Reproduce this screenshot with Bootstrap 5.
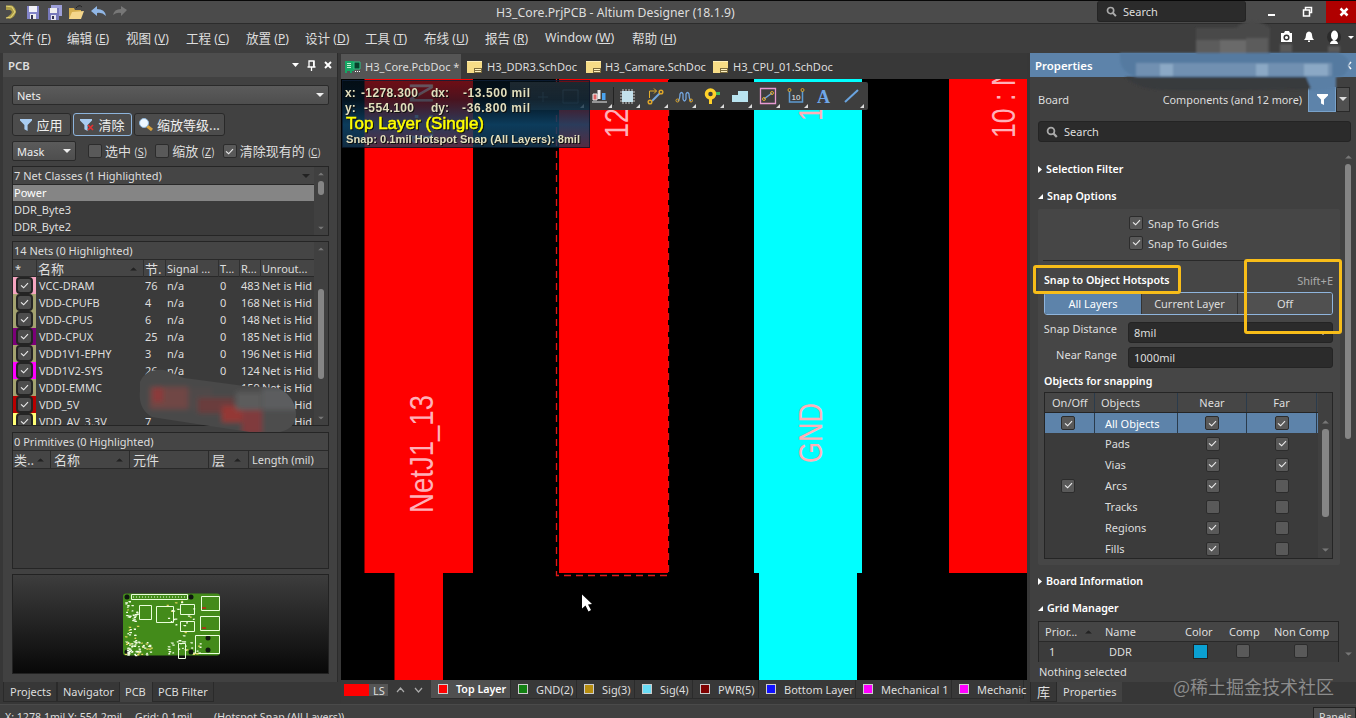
<!DOCTYPE html>
<html lang="zh">
<head>
<meta charset="utf-8">
<title>H3_Core.PrjPCB - Altium Designer (18.1.9)</title>
<meta name="viewport" content="width=device-width, initial-scale=1">
<link href="https://cdn.jsdelivr.net/npm/bootstrap@5.3.0/dist/css/bootstrap.min.css" rel="stylesheet">
<style>
html,body{height:718px;overflow:hidden}
body{width:1356px;background:#373737;color:#dedede;font:11px/17px "Noto Sans","Noto Sans CJK SC",sans-serif;white-space:nowrap}
.cjk{font-family:"Noto Sans CJK SC",sans-serif;font-size:13px}
svg{display:block;flex:none}
.titlebar{height:24px;background:#4b4b4b;border-top:1px solid #080808;border-bottom:1px solid #2c2c2c;font-size:11px}
.menubar{height:29px;background:#3e3e3e;font-size:12px}
.menubar span.m{position:relative;flex:none}
.menubar .cjk{font-size:12.6px}
.work{height:651px}
.leftcol{width:341px;padding-left:3px}
.lpanel{width:335px;height:629px;background:#414141;border-right:1px solid #2b2b2b}
.phead{height:24px;background:#4d4d4d;font-weight:600;font-size:11.4px}
.combo{background:linear-gradient(#5b5b5b,#4e4e4e);border:1px solid #2a2a2a;border-radius:2px;color:#eee}
.tool-btn{height:23px;background:#4c4c4c;border:1px solid #292929;border-radius:3px;color:#eee;gap:4px}
.tool-btn.sel{border-color:#8db4dc}
.box{background:#3b3b3b;border:1px solid #252525;overflow:hidden}
.bhead{background:#454545;border-bottom:1px solid #292929}
.chk{width:14px;height:14px;border-radius:2px;background:#595959;border:1px solid #2c2c2c;flex:none;display:inline-flex;align-items:center;justify-content:center}
.net-row{display:grid;grid-template-columns:25px 107px 22px 53px 21px 21px 1fr;height:17px;line-height:17px}
.net-head>span+span{border-left:1px solid #303030;margin-left:-2px;padding-left:1px}
.strip{display:flex;align-items:center;justify-content:center;border-bottom:1px solid #222}
.strip .chk{width:17px;height:17px;background:#4d4d4d;border:2px solid #242424;border-radius:4px}
.prim-head>span{display:flex;align-items:center}
.prim-head>span+span{border-left:1px solid #2b2b2b;padding-left:3px}
.sb{width:14px;background:#404040;position:relative;flex:none}
.thumb{background:#858585;border-radius:3px;width:6px;margin:0 auto}
.preview{background:linear-gradient(#3d3d3d,#080808);border:1px solid #222}
.ptab{height:20px;line-height:20px;background:#373737;border:1px solid #2a2a2a;border-top:0;font-size:11px}
.ptab.on{background:#424242;border-color:#424242}
.midcol{width:686px;background:#383838}
.doctab{height:25px;font-size:11.05px;line-height:15px}
.doctab.on{background:#555}
.canvas{height:601px;position:relative;background:#000}
.cad-tools{position:absolute;left:169px;top:3px;width:358px;height:28px;background:#3e3e3e;border-radius:0 2px 2px 0}
.hud{position:absolute;left:1px;top:1px;width:248px;height:68px;border:1px solid rgba(10,20,40,.7);background:linear-gradient(rgba(6,24,36,.58),rgba(4,26,42,.72) 28%,rgba(14,68,104,.88) 66%,rgba(22,60,90,.74))}
.hud svg{filter:drop-shadow(1px 1px 0 #111)}
.layer{height:19px;line-height:19px;border-right:1px solid #2b2b2b;border-bottom:1px solid #2b2b2b}
.layer i{width:10px;height:10px;border:1px solid #ccc;flex:none}
.rightcol{width:329px;padding-left:3px}
.rpanel{height:629px;background:#404040;position:relative;overflow:hidden}
.rhead{background:#5d83aa;color:#fff}
.darkfield{background:#2b2b2b;border:1px solid #242424;border-radius:3px}
.sec{font-weight:600;color:#fff;font-size:10.7px;height:17px}
.grp{width:302px;height:356px;margin-left:8px;background:#464646;border-radius:2px;padding:0 7px 0 5px}
.seg{height:23px;border:1px solid #8fb5dd;border-radius:3px;overflow:hidden;margin-left:1px;width:289px}
.seg>div{background:#505050;text-align:center;line-height:21px;border-right:1px solid #333}
.snap-row{display:grid;grid-template-columns:50px 83px 69px 70px;height:21px;align-items:center}
.snap-row>*{display:flex;align-items:center;height:100%}
.snap-row.hl{height:20px;background:#5d83aa;color:#fff}
.snap-row.hl>*,.snap-head>*{border-right:1px solid #2a3b4c}
.snap-head{height:20px;background:#464646;border-bottom:1px solid #252525}
.grid-row{display:grid;grid-template-columns:60px 79px 45px 45px 1fr}
.yel{position:absolute;border:3px solid #f8bd19;border-radius:3px}
.status{height:14px;background:#404040;border-top:1px solid #4a4a4a;overflow:hidden;position:relative;font-size:10.6px}
.mosaic{position:absolute;pointer-events:none}
.wm{position:absolute;left:1173px;top:673px;font:18px/26px "Noto Sans CJK SC",sans-serif;color:#8c8c8c}
</style>
<script src="https://cdn.jsdelivr.net/npm/bootstrap@5.3.0/dist/js/bootstrap.bundle.min.js"></script>
</head>
<body class="position-relative">
<svg width="0" height="0" class="position-absolute">
<symbol id="ck" viewBox="0 0 10 8"><path d="M1 3.8 4 6.6 9 1.2" fill="none" stroke="#ececec" stroke-width="1.3"/></symbol>
<symbol id="up" viewBox="0 0 8 4"><path d="M0 4 4 0l4 4z" fill="currentColor"/></symbol>
<symbol id="dn" viewBox="0 0 8 4"><path d="M0 0h8L4 4z" fill="currentColor"/></symbol>
<symbol id="mag" viewBox="0 0 12 12"><circle cx="5" cy="5" r="3.4" fill="none" stroke="#aaa" stroke-width="1.8"/><path d="m7.5 7.5 3.3 3.6" stroke="#aaa" stroke-width="2.2"/></symbol>
<symbol id="fun" viewBox="0 0 12 12"><path d="M0 0h12v1.5L7.6 6v6L4.4 10.3V6L0 1.5z" fill="currentColor"/></symbol>
<symbol id="sch" viewBox="0 0 15 12"><path d="M0 0h15v12H0z" fill="#f6dc86"/><path d="M0 0h15v1H0z" fill="#fff0b8"/><path d="M7 7h8v5H7z" fill="#7c6c3d"/><path d="M8 8h6v1H8zm0 2h6v1H8z" fill="#fff2c0"/></symbol>
</svg>

<header class="titlebar d-flex align-items-center">
 <svg width="130" height="22" viewBox="0 1 130 22">
  <path d="M6 6q8-3 10 5q0 5-6 8l-4-1 5-4q2-3-1-4l-4 0z" fill="#a99a45"/><path d="M6 6l6 1 3 5-4 5-5 1" fill="none" stroke="#e2d27a" stroke-width="1.2"/>
  <path d="M27 6h12v13H27z" fill="#8385c8"/><path d="M29 6h8v6h-8z" fill="#f2f2f8"/><path d="M30 14h6v5h-6z" fill="#eee"/><path d="M31 15h2v4h-2z" fill="#335"/>
  <path d="M51 5h11v11H51z" fill="#9d9fd8"/><path d="M48 8h11v12H48z" fill="#7779bb"/><path d="M50 8h7v5h-7z" fill="#eee"/><path d="M51 15h5v5h-5z" fill="#e5e5f0"/><path d="M52 16h2v3h-2z" fill="#335"/>
  <path d="M69 8h5l1 2h6v9H69z" fill="#d5ae4e"/><path d="m72 12 12-1-3 8H69z" fill="#f4d68b"/><path d="M76 8q3-4 6-1" stroke="#222" fill="none"/>
  <path d="m91 11 6-5v3q8 0 9 7-4-4-9-3v3z" fill="#91b7e6"/>
  <path d="m127 10-6-4v3q-7 0-8 6 4-3 8-2v3z" fill="#777"/>
 </svg>
 <div class="flex-shrink-0" style="width:601px;margin-left:366px;padding-top:1px;font-size:12.250px">H3_Core.PrjPCB - Altium Designer (18.1.9)</div>
 <div class="darkfield d-flex align-items-center ps-2 flex-shrink-0 align-self-start" style="width:149px;height:21px;border-top:0;margin-right:20px"><svg width="11" height="11" viewBox="0 0 12 12"><use href="#mag"/></svg><span style="margin-left:6px">Search</span></div>
 <svg width="60" height="22" viewBox="1266 1 60 22"><path d="M1268 14h7v2h-7z" fill="#fff"/><path d="M1303.500 10h6v6h-6zM1305.500 9.500V7.500h6v5h-2" fill="none" stroke="#fff" stroke-width="1.500"/></svg>
 <div class="d-flex align-items-center justify-content-center" style="width:30px;height:22px;background:#b00000"><svg width="10" height="10" style="margin-left:5px"><path d="m1.500 1.500 7 7m0-7-7 7" stroke="#fff" stroke-width="2.500"/></svg></div>
</header>

<nav class="menubar position-relative">
 <div id="menus" class="d-flex align-items-center" style="padding-left:9px;height:27px"></div>
 <svg width="80" height="20" viewBox="1276 28 80 20" class="position-absolute end-0" style="top:4px"><path d="M1281 33h3l1-2h4l1 2h2v9h-11z" fill="#fff"/><circle cx="1286.500" cy="37.500" r="2.300" fill="#fff" stroke="#333" stroke-width="1.500"/><path d="M1304 40q2-2 2-5 0-3 3-3.500 3 .5 3 3.500 0 3 2 5zM1308 40.500h2v1.500h-2z" fill="#fff"/><circle cx="1334" cy="37" r="7" fill="#2b2b2b"/><ellipse cx="1334.500" cy="35.500" rx="3.500" ry="5" fill="#fff"/><path d="M1330 44q0-3 4-4 4 1 4 4z" fill="#fff"/><path d="M1348 36h6l-3 3z" fill="#fff"/></svg>
</nav>

<main class="work d-flex">
<section class="leftcol flex-shrink-0">
 <div class="lpanel">
  <div class="phead d-flex align-items-center ps-1"><span style="margin-left:1px">PCB</span>
   <svg class="ms-auto" width="50" height="14" viewBox="0 0 50 14"><path d="M5 5h7l-3.500 4z" fill="#fff"/><path d="M22 3h5v6h-5zM20.500 9h8M24.500 9v4" stroke="#fff" stroke-width="1.300" fill="none"/><path d="M26 3h1.500v6H26z" fill="#fff"/><path d="m38 4 6 6m0-6-6 6" stroke="#fff" stroke-width="1.900"/></svg></div>
  <div style="padding:8px 8px 0 9px">
   <div class="combo d-flex align-items-center px-1" style="height:20px">Nets<svg class="ms-auto" width="8" height="4"><use href="#dn"/></svg></div>
   <div class="d-flex" style="gap:2px;margin-top:8px">
    <div class="tool-btn d-flex align-items-center justify-content-center" style="width:59px"><svg width="12" height="12" style="color:#a9cdf2"><use href="#fun"/></svg><span class="cjk">应用</span></div>
    <div class="tool-btn sel d-flex align-items-center justify-content-center" style="width:59px"><svg width="14" height="12" viewBox="0 0 14 12" style="color:#a9cdf2"><use href="#fun" width="12" height="12"/><path d="m8 6 5 5m0-5-5 5" stroke="#e43131" stroke-width="1.700"/></svg><span class="cjk">清除</span></div>
    <div class="tool-btn d-flex align-items-center justify-content-center" style="width:91px"><svg width="14" height="13" viewBox="0 0 14 13"><path d="m8 8 5 4" stroke="#d7a13d" stroke-width="3"/><circle cx="5" cy="5" r="4.500" fill="#eef8ff" stroke="#91b8dc"/></svg><span class="cjk">缩放等级...</span></div>
   </div>
   <div class="d-flex align-items-center" style="height:20px;margin-top:5px">
    <div class="combo d-flex align-items-center px-1" style="width:64px;height:20px">Mask<svg class="ms-auto" width="8" height="4"><use href="#dn"/></svg></div>
    <span class="chk" style="margin-left:12px"></span><span class="cjk" style="margin-left:3px">选中 <small style="font-size:10.500px">(<u>S</u>)</small></span>
    <span class="chk" style="margin-left:8px"></span><span class="cjk" style="margin-left:3px">缩放 <small style="font-size:10.500px">(<u>Z</u>)</small></span>
    <span class="chk" style="margin-left:8px"><svg width="9" height="7"><use href="#ck"/></svg></span><span class="cjk" style="margin-left:3px">清除现有的 <small style="font-size:10px">(<u>C</u>)</small></span>
   </div>
   <div class="box d-flex" style="height:70px;margin-top:5px">
    <div class="flex-grow-1"><div class="bhead d-flex align-items-center" style="height:18px;padding-left:1px">7 Net Classes (1 Highlighted)<svg class="ms-auto me-1" width="8" height="4" style="color:#222"><use href="#dn"/></svg></div>
     <div style="background:#858585;color:#fff;height:16px;line-height:16px;padding-left:1px">Power</div><div style="padding-left:1px">DDR_Byte3</div><div style="padding-left:1px">DDR_Byte2</div></div>
    <div class="sb d-flex flex-column align-items-center" style="color:#777;padding:5px 0"><svg width="6" height="4" viewBox="0 0 8 4"><use href="#up"/></svg><div class="thumb" style="height:14px;margin-top:5px"></div><svg class="mt-auto" width="6" height="4" viewBox="0 0 8 4"><use href="#dn"/></svg></div>
   </div>
   <div class="box d-flex" style="height:185px;margin-top:5px">
    <div class="flex-grow-1"><div class="bhead" style="height:18px;padding-left:1px">14 Nets (0 Highlighted)</div>
     <div class="bhead net-row net-head"><span style="padding-left:2px">*</span><span class="cjk d-flex align-items-center">名称<svg class="ms-auto me-2" width="7" height="4" viewBox="0 0 8 4" style="color:#222"><use href="#up"/></svg></span><span class="cjk">节.</span><span>Signal ...</span><span>T...</span><span>R...</span><span>Unrout...</span></div>
     <div id="nets"></div></div>
    <div class="sb d-flex flex-column align-items-center" style="color:#777;padding:5px 0"><svg width="6" height="4" viewBox="0 0 8 4"><use href="#up"/></svg><div class="thumb" style="height:90px;margin-top:38px"></div><svg class="mt-auto" width="6" height="4" viewBox="0 0 8 4"><use href="#dn"/></svg></div>
   </div>
   <div class="box" style="height:137px;margin-top:6px"><div class="bhead" style="height:18px;padding-left:1px">0 Primitives (0 Highlighted)</div>
    <div class="bhead d-flex prim-head" style="height:18px"><span class="cjk" style="width:37px;padding-left:1px">类..<svg class="ms-auto" width="7" height="4" viewBox="0 0 8 4" style="color:#222;margin-right:6px"><use href="#up"/></svg></span><span class="cjk" style="width:79px">名称<svg class="ms-auto" width="7" height="4" viewBox="0 0 8 4" style="color:#222;margin-right:6px"><use href="#up"/></svg></span><span class="cjk" style="width:79px">元件</span><span class="cjk" style="width:40px">层<svg class="ms-auto" width="7" height="4" viewBox="0 0 8 4" style="color:#222;margin-right:7px"><use href="#up"/></svg></span><span>Length (mil)</span></div></div>
   <div class="preview d-flex" style="height:100px;margin-top:5px" id="pv"></div>
  </div>
 </div>
 <div class="d-flex"><div class="ptab" style="width:54px;padding-left:6px">Projects</div><div class="ptab" style="width:63px;padding-left:5px">Navigator</div><div class="ptab on" style="width:32px;padding-left:4px">PCB</div><div class="ptab" style="width:62px;padding-left:5px">PCB Filter</div></div>
</section>

<section class="midcol flex-shrink-0">
 <div class="d-flex" style="height:26px;padding-top:1px">
  <div class="doctab on d-flex align-items-center" style="width:120px;padding-left:4px"><svg width="16" height="12" viewBox="0 0 16 12"><path d="M0 0h9v10H7v2H5v-2H2v2H0z" fill="#16a765"/><path d="M2 2h4v1H2zm0 2h4v1H2zm0 2h4v1H2z" fill="#bff0d0"/><path d="M9 1h6v7H9z" fill="#073f2a" stroke="#2fc483"/><path d="M10 10h1v1h-1zm2 0h1v1h-1zm2 0h1v1h-1z" fill="#fff"/></svg><span style="margin-left:4px">H3_Core.PcbDoc *</span></div>
  <div class="doctab d-flex align-items-center" style="width:118px;padding-left:6px"><svg width="15" height="12"><use href="#sch"/></svg><span style="margin-left:5px">H3_DDR3.SchDoc</span></div>
  <div class="doctab d-flex align-items-center" style="width:128px;padding-left:7px"><svg width="15" height="12"><use href="#sch"/></svg><span style="margin-left:4px">H3_Camare.SchDoc</span></div>
  <div class="doctab d-flex align-items-center" style="padding-left:6px"><svg width="15" height="12"><use href="#sch"/></svg><span style="margin-left:5px">H3_CPU_01.SchDoc</span></div>
 </div>
 <div class="canvas">
  <svg width="686" height="601" viewBox="341 79 686 601" font-family="Liberation Sans, sans-serif" font-size="33" fill="#ffb0b8">
   <path d="M364.500 79H473V573H443V680H394.500V573H364.500zM559 79H668V573H559zM949 79h78V573H949z" fill="#f00"/><path d="M754 79H862V573H857V680H759V573H754z" fill="#0ff"/>
   <path d="M556.500 79V575.500h112V79" fill="none" stroke="#e01818" stroke-width="1.300" stroke-dasharray="7 5"/>
   <text transform="translate(433 513) rotate(-90)" textLength="118" lengthAdjust="spacingAndGlyphs">NetJ1_13</text>
   <text transform="translate(822 463) rotate(-90)" textLength="60" lengthAdjust="spacingAndGlyphs">GND</text>
   <text transform="translate(628 138) rotate(-90)" textLength="30" lengthAdjust="spacingAndGlyphs">12</text>
   <text transform="translate(822 121) rotate(-90)" textLength="15" lengthAdjust="spacingAndGlyphs">1</text>
   <text transform="translate(1015 138) rotate(-90)" textLength="71" lengthAdjust="spacingAndGlyphs">10 : N</text>
   <text transform="translate(433 146) rotate(-90)" textLength="64" lengthAdjust="spacingAndGlyphs">1 : N</text>
   <path d="m582 594.500 0 14 3.500-3 3 6 2.500-1.500-3-5.500 4-.5z" fill="#fff"/>
  </svg>
  <div class="cad-tools"><svg width="358" height="28" viewBox="510 82 358 28" fill="none">
   <path d="m543 92v10m-5-5h10M563 90h15v13h-15z" stroke="#5c6a74"/>
   <path d="M592 102h15M593 94h4v6h-4z" stroke="#eee" fill="#d66"/><path d="M597.500 90h3v9h-3z" fill="#eee"/><path d="M602 93h3.500v7H602z" fill="#4ba3ef"/><path d="M613.500 87v18" stroke="#222"/>
   <path d="M620 92h15m-15 3h15m-15 3h15m-15 3h15m-12-12v15m3-15v15m3-15v15m3-15v15" stroke="#ccc"/><path d="M622 91h11v11h-11z" fill="#c4e1ec"/>
   <path d="M649.500 98v-7h7m-2.500-2.500 2.500 2.500-2.500 2.500" stroke="#e4ad2a"/><path d="m652 101 8-8" stroke="#74a6df" stroke-width="2"/><g stroke="#dea62a" stroke-width="1.500"><circle cx="650" cy="102" r="1.800"/><circle cx="661" cy="92" r="1.800"/></g>
   <path d="M678 101q2-2 2-7 1.500-3 3 0v5q1.500 4 3 0v-5q1.500-3 3 0 0 5 2 7" stroke="#74a6df" stroke-width="1.300"/><circle cx="677.500" cy="100.500" r="1.500" stroke="#dea62a"/><circle cx="691" cy="100.500" r="1.500" stroke="#dea62a"/>
   <path d="M714 93.500h6" stroke="#3dbb59" stroke-width="3"/><circle cx="710.500" cy="94" r="4" stroke="#ffd22a" stroke-width="3.500"/><path d="M709 98h3v6h-3z" fill="#ffd22a"/>
   <path d="M732 95h6v-4h10v11h-16z" fill="#b9e4ef"/>
   <path d="M760.500 88.500h15v15h-15z" stroke="#e79ad2" stroke-width="1.300"/><path d="m764 99 8-6" stroke="#74a6df" stroke-width="1.500"/><circle cx="764" cy="99" r="1.500" stroke="#dea62a"/><circle cx="772" cy="93" r="1.500" stroke="#dea62a"/>
   <path d="M789.500 91v11h13V91" stroke="#5e9bd1" stroke-width="1.500"/><circle cx="789.500" cy="90" r="1.500" stroke="#dea62a"/><circle cx="802.500" cy="90" r="1.500" stroke="#dea62a"/>
   <text x="791.500" y="100" font-family="Liberation Sans" font-size="8" fill="#eee">10</text><text x="817" y="103" font-family="Liberation Serif" font-weight="bold" font-size="18" fill="#6fa7e8">A</text>
   <path d="m845 102 13-12" stroke="#6aa4df" stroke-width="2"/>
   <path d="M584 104v4h-4zM612 104v4h-4zM640 104v4h-4zM668 104v4h-4zM696 104v4h-4zM724 104v4h-4zM752 104v4h-4zM780 104v4h-4zM808 104v4h-4zM864 104v4h-4z" fill="#ddd"/>
  </svg></div>
  <div class="hud"><svg width="246" height="66" viewBox="343 81 246 66" font-weight="bold" font-family="Liberation Sans, sans-serif" font-size="12" fill="#e3dfbd">
   <text x="345" y="97">x:</text><text x="361" y="97" textLength="57">-1278.300</text><text x="431" y="97">dx:</text><text x="463" y="97" textLength="67">-13.500 mil</text>
   <text x="345" y="112">y:</text><text x="364" y="112" textLength="50">-554.100</text><text x="431" y="112">dy:</text><text x="462" y="112" textLength="68">-36.800 mil</text>
   <text x="346" y="129" font-size="16" font-weight="normal" stroke="#ff0" stroke-width=".5" fill="#ff0" textLength="138" lengthAdjust="spacingAndGlyphs">Top Layer (Single)</text>
   <text x="346" y="143" font-size="10.500" textLength="234" lengthAdjust="spacingAndGlyphs">Snap: 0.1mil Hotspot Snap (All Layers): 8mil</text></svg></div>
 </div>
 <div class="d-flex" style="height:24px;overflow:hidden;padding-left:3px">
  <div style="width:25px;height:12px;background:red;margin-top:4px"></div><div style="width:19px;height:12px;line-height:13px;margin-top:4px;background:#555;padding-left:4px;font-size:11px">LS</div>
  <svg width="43" height="19"><path d="m9 12 3.500-4 3.500 4M27 8l3.500 4L34 8" fill="none" stroke="#aaa" stroke-width="1.200"/></svg>
  <div id="layers" class="d-flex"></div>
 </div>
</section>

<section class="rightcol flex-shrink-0">
 <div class="rpanel">
  <div class="phead rhead d-flex align-items-center" style="padding-left:5px">Properties<svg class="ms-auto me-1" width="5" height="9"><path d="M4 1 1 4.500 4 8" stroke="#fff" stroke-width="1.500" fill="none"/></svg></div>
  <div class="d-flex align-items-center" style="height:44px;padding-left:8px">Board<span class="ms-auto" style="font-size:10.850px">Components (and 12 more)</span>
   <div class="d-flex align-items-center justify-content-center" style="width:28px;height:25px;margin-left:6px;background:#5d83aa;border:1px solid #79a2ca"><svg width="11" height="11" viewBox="0 0 12 12" style="color:#fff"><use href="#fun"/></svg></div><div class="d-flex align-items-center justify-content-center" style="width:14px;height:25px;margin-right:6px;background:#505050;border:1px solid #292929"><svg width="8" height="4"><use href="#dn"/></svg></div></div>
  <div class="darkfield d-flex align-items-center" style="width:313px;height:21px;margin-left:8px;padding-left:7px"><svg width="12" height="12"><use href="#mag"/></svg><span style="margin-left:6px">Search</span></div>
  <div class="sec d-flex align-items-center" style="margin:19px 0 0 8px"><svg width="4" height="7"><path d="M0 0l4 3.500L0 7z" fill="#fff"/></svg><span style="margin-left:4px">Selection Filter</span></div>
  <div class="sec d-flex align-items-center" style="margin:10px 0 0 8px"><svg width="5" height="5"><path d="M5 0v5H0z" fill="#fff"/></svg><span style="margin-left:4px">Snap Options</span></div>
  <div class="grp" style="margin-top:4px">
   <div class="d-flex align-items-center" style="height:20px;padding:7px 0 0 86px"><span class="chk"><svg width="9" height="7"><use href="#ck"/></svg></span><span style="margin-left:5px;padding-top:1px">Snap To Grids</span></div>
   <div class="d-flex align-items-center" style="height:20px;padding:7px 0 0 86px"><span class="chk"><svg width="9" height="7"><use href="#ck"/></svg></span><span style="margin-left:5px;padding-top:1px">Snap To Guides</span></div>
   <div style="height:1px;background:#292929;margin-top:11px"></div>
   <div class="d-flex" style="height:31px;padding:11px 0 0 1px"><span class="fw-semibold text-white me-auto" style="font-size:10.650px">Snap to Object Hotspots</span><span style="color:#aaa">Shift+E</span></div>
   <div class="seg d-flex"><div style="width:97px;background:#5d83aa;color:#fff">All Layers</div><div style="width:96px">Current Layer</div><div class="flex-grow-1 border-0">Off</div></div>
   <div class="d-flex" style="height:22px;margin-top:5px"><span class="text-end" style="width:74px">Snap Distance</span><div class="darkfield d-flex align-items-center" style="width:205px;height:21px;margin:2px 0 0 11px;padding:0 5px">8mil<svg class="ms-auto" width="8" height="4"><use href="#dn"/></svg></div></div>
   <div class="d-flex" style="height:22px;margin-top:3px"><span class="text-end" style="width:74px;padding-top:1px">Near Range</span><div class="darkfield d-flex align-items-center" style="width:205px;height:21px;margin:2px 0 0 11px;padding:0 5px">1000mil</div></div>
   <div class="fw-semibold text-white" style="height:20px;margin:5px 0 0 1px;font-size:10.700px;line-height:18px">Objects for snapping</div>
   <div class="box d-flex" style="width:289px;height:167px;margin-left:1px"><div style="width:273px"><div class="snap-row snap-head"><span style="padding-left:7px">On/Off</span><span style="padding-left:6px">Objects</span><span class="justify-content-center">Near</span><span class="justify-content-center">Far</span></div><div id="snap"></div></div>
    <div class="sb d-flex flex-column align-items-center flex-grow-1" style="color:#777;padding:27px 0 6px"><svg width="7" height="4" viewBox="0 0 8 4"><use href="#up"/></svg><div class="thumb" style="height:88px;margin-top:5px;width:7px"></div><svg class="mt-auto" width="7" height="4" viewBox="0 0 8 4"><use href="#dn"/></svg></div></div>
  </div>
  <div class="sec d-flex align-items-center" style="margin:8px 0 0 8px"><svg width="4" height="7"><path d="M0 0l4 3.500L0 7z" fill="#fff"/></svg><span style="margin-left:4px">Board Information</span></div>
  <div class="sec d-flex align-items-center" style="margin:10px 0 0 8px"><svg width="5" height="5"><path d="M5 0v5H0z" fill="#fff"/></svg><span style="margin-left:4px">Grid Manager</span></div>
  <div class="box border-bottom-0" style="width:301px;height:41px;margin:4px 0 0 8px">
   <div class="grid-row bhead" style="height:20px;line-height:19px"><span class="d-flex align-items-center" style="padding-left:6px">Prior...<svg width="7" height="4" viewBox="0 0 8 4" style="color:#222;margin-left:8px"><use href="#up"/></svg></span><span style="padding-left:6px">Name</span><span style="padding-left:7px">Color</span><span style="padding-left:6px">Comp</span><span style="padding-left:6px">Non Comp</span></div>
   <div class="grid-row" style="height:20px;line-height:20px"><span style="padding-left:10px">1</span><span style="padding-left:10px">DDR</span><span style="padding:2px 0 0 15px"><i class="d-block" style="width:15px;height:15px;background:#0aa0d2;border:1px solid #222"></i></span><span style="padding:2px 0 0 13px"><i class="chk d-block"></i></span><span style="padding:2px 0 0 26px"><i class="chk d-block"></i></span></div></div>
  <div style="padding-left:9px;margin-top:1px">Nothing selected</div>
  <div class="sb position-absolute" style="right:1px;top:100px;width:14px;height:508px;color:#777;background:none"><svg width="7" height="4" viewBox="0 0 8 4" style="margin:2px auto 0"><use href="#up"/></svg><div class="thumb" style="height:275px;margin-top:5px"></div><svg width="7" height="4" viewBox="0 0 8 4" style="margin:213px auto 0"><use href="#dn"/></svg></div>
 </div>
 <div class="d-flex"><div class="ptab cjk text-center" style="width:27px;font-size:13px">库</div><div class="ptab on" style="width:65px;padding-left:5px">Properties</div></div>
</section>
</main>
<footer class="status"><div class="d-flex" style="padding:4px 0 0 5px"><span style="width:130px">X: 1278.1mil Y: 554.2mil</span><span style="width:79px">Grid: 0.1mil</span><span>(Hotspot Snap (All Layers))</span><span class="ms-auto" style="background:#505050;border:1px solid #222;width:43px;margin:-2px 0 0;padding:1px 0 0 5px">Panels</span></div></footer>

<div class="yel" style="left:1033px;top:265px;width:148px;height:29px"></div>
<div class="yel" style="left:1244px;top:259px;width:98px;height:75px"></div>
<svg class="mosaic" style="left:130px;top:365px" width="175" height="75" viewBox="130 365 175 75"><defs><clipPath id="m1"><path d="M140 382q6-14 24-12l20 8 60 8 34 2q17 8 18 26 0 14-16 18h-30l-40-6-58-9q-14-8-12-26z"/></clipPath><filter id="bl"><feGaussianBlur stdDeviation="2.500"/></filter></defs><g clip-path="url(#m1)"><g filter="url(#bl)"><path d="M120 355h195v95H120z" fill="#484848"/><path d="M150 387h38v22h-38z" fill="#704644"/><path d="M153 388h10v14h-10z" fill="#8c3b3b"/><path d="M188 388h24v22h-24z" fill="#504848"/><path d="M198 398h36v15h-36z" fill="#6a3e3e"/><path d="M222 406h20v16h-20z" fill="#943736"/><path d="M242 410h20v24h-20z" fill="#803a3c"/><path d="M236 392h25v18h-25z" fill="#5c5c5c"/><path d="M262 388h40v22h-40z" fill="#5b5d5f"/><path d="M262 411h40v25h-40z" fill="#4d4d4d"/></g></g></svg>
<svg class="mosaic" style="left:1110px;top:18px" width="246" height="78" viewBox="1110 18 246 78"><filter id="b2"><feGaussianBlur stdDeviation="1.200"/></filter><g filter="url(#b2)"><path d="M1196 28h40q15-14 34 0v26h-74z" fill="#4a4a4a"/><path d="M1196 40h24v13h-24zM1246 38h22v16h-22z" fill="#5c5c5c"/><path d="M1220 40h26v14h-26z" fill="#6b6b6b"/><path d="M1280 44h12v8h-12zM1328 46h12v6h-12z" fill="#5a5a5a"/><path d="M1125 77h200l-15 12q-90 2-150 1-24-2-35-13z" fill="#393b3e"/><path d="M1306 77h30v12l-24 2z" fill="#5a7fa5"/><path d="M1120 53h218q12 4 11 12-2 12-11 12h-200q-20-4-18-24z" fill="#547aa0"/><path d="M1136 63h196v13h-196z" fill="#7190b1"/><path d="M1160 64h13v12h-13zM1256 64h12v12h-12zM1304 64h24v12h-24z" fill="#8ba8c5"/></g><path d="M1317 94h10l-3.500 4v5l-3-2v-3z" fill="#fff"/></svg>
<div class="wm">@稀土掘金技术社区</div>

<script>
const check = '<svg width="9" height="7"><use href="#ck"/></svg>';
document.getElementById('menus').innerHTML = [['文件','F',58],['编辑','E',59],['视图','V',60],['工程','C',60],['放置','P',59],['设计','D',60],['工具','T',59],['布线','U',61],['报告','R',60],['Window','W',87],['帮助','H',50]]
 .map(m => `<span class="m" style="width:${m[2]}px${m[0]=='Window'?';font-size:12.4px;padding-bottom:1px':''}"><span class="${m[0]=='Window'?'':'cjk'}">${m[0]}</span> (<u>${m[1]}</u>)</span>`).join('');
document.getElementById('nets').innerHTML = [['VCC-DRAM','76','483','#f5a5c0'],['VDD-CPUFB','4','168','#a3a26f'],['VDD-CPUS','6','148','#a3a26f'],['VDD-CPUX','25','185','#7b0078'],['VDD1V1-EPHY','3','196','#a3a26f'],['VDD1V2-SYS','26','124','#f0f'],['VDDI-EMMC','','159','#a3a26f'],['VDD_5V','','','#b80000'],['VDD_AV_3.3V','7','','#ffff75']]
 .map((n,i) => `<div class="net-row"><span class="strip" style="background:${n[3]};width:23px"><b class="chk">${check}</b></span><span style="padding-left:1px">${n[0]}</span><span>${n[1]}</span><span>${i<6?'n/a':''}</span><span>${i<6?'0':''}</span><span>${n[2]}</span><span>Net is Hid</span></div>`).join('');
document.getElementById('snap').innerHTML = [['All Objects',1,1,1],['Pads',2,1,1],['Vias',2,1,1],['Arcs',1,1,0],['Tracks',2,0,0],['Regions',2,1,0],['Fills',2,1,0]]
 .map((r,i) => { const c = v => v==2 ? '' : `<b class="chk">${v?check:''}</b>`;
 return `<div class="snap-row ${i?'':'hl'}"><span style="padding-left:16px">${c(r[1])}</span><span style="padding-left:10px">${r[0]}</span><span class="justify-content-center">${c(r[2])}</span><span class="justify-content-center">${c(r[3])}</span></div>`; }).join('');
document.getElementById('layers').innerHTML = [['Top Layer','#f00',80],['GND(2)','#128012',66],['Sig(3)','#b68d10',58],['Sig(4)','#6adcf5',58],['PWR(5)','#7e0000',66],['Bottom Layer','#1010ff',97],['Mechanical 1','#f0f',96],['Mechanic','#f0f',72]]
 .map((l,i) => `<div class="layer d-flex align-items-center flex-shrink-0" style="width:${l[2]}px;padding-left:7px;${i?'':'background:#505050;font-weight:600;color:#fff;font-size:10.7px'}"><i style="background:${l[1]}"></i><span style="margin-left:8px">${l[0]}</span></div>`).join('');

/* board thumbnail: outline, connectors and scattered silkscreen marks */
let marks='', s=7; const rnd=()=>(s=(s*1103+12345)%65521)/65521;
for(let i=0;i<150;i++){const zone=i%3, x=zone==0?124+rnd()*14:zone==1?126+rnd()*25:165+rnd()*35, y=zone==0?600+rnd()*54:zone==1?642+rnd()*13:(rnd()<.6?640+rnd()*14:600+rnd()*40);
 marks+=`<path d="M${x.toFixed(1)} ${y.toFixed(1)}h${(1+rnd()*2.5).toFixed(1)}v1.300h-2z" fill="${i%5?'#f5ffe8':'#e5d45b'}"/>`;}
document.getElementById('pv').innerHTML=`<svg width="315" height="98" viewBox="13 575 315 98"><rect x="123" y="593.500" width="97" height="62" rx="3" fill="#438b1a"/><g fill="#101810"><circle cx="127" cy="597" r="2.500"/><circle cx="191" cy="597" r="2.500"/><circle cx="127" cy="652" r="2.500"/><circle cx="191" cy="652" r="2.500"/><circle cx="208" cy="638" r="2.500"/><circle cx="208" cy="650" r="2.500"/></g><g fill="none" stroke="#eaffdc"><path d="M131.500 594.500h56v5h-56zM139.500 605.500h12v14h-12zM156.500 606.500h17v16h-17zM180.500 604.500h14v10h-14zM180.500 621.500h14v10h-14zM201.500 596.500h18v14h-18zM200.500 616.500h19v14h-19zM195.500 635.500h24v18h-24zM178.500 643.500h7v15h-7z"/><path d="M133 597h54" stroke-dasharray="1 2"/></g><g>${marks}</g><path d="M202 607h4v2h-4zM202 627h4v2h-4z" fill="#a33c15"/></svg>`;
</script>
</body>
</html>
